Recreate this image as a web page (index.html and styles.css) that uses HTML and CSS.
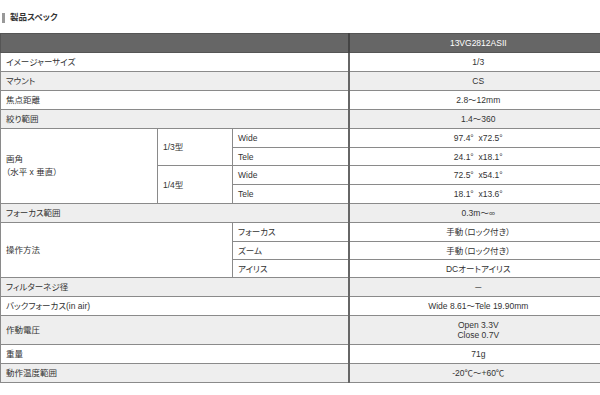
FILE: index.html
```html
<!DOCTYPE html>
<html lang="ja">
<head>
<meta charset="utf-8">
<title>製品スペック</title>
<link rel="stylesheet" href="styles.css">
</head>
<body>
<div class="heading"><span class="bar"></span><h2 class="title">製品スペック</h2></div>
<table class="spec">
  <colgroup>
    <col class="c1"><col class="c2"><col class="c3"><col class="c4">
  </colgroup>
  <thead>
    <tr><th colspan="3" class="blank"></th><th class="model">13VG2812ASII</th></tr>
  </thead>
  <tbody>
    <tr class="w"><td colspan="3">イメージャーサイズ</td><td class="v">1/3</td></tr>
    <tr class="g"><td colspan="3">マウント</td><td class="v">CS</td></tr>
    <tr class="w"><td colspan="3">焦点距離</td><td class="v">2.8～12mm</td></tr>
    <tr class="g"><td colspan="3">絞り範囲</td><td class="v">1.4～360</td></tr>
    <tr class="w"><td rowspan="4" class="angle">画角<br>（水平 x 垂直）</td><td rowspan="2">1/3型</td><td>Wide</td><td class="v">97.4°&nbsp; x72.5°</td></tr>
    <tr class="w short"><td>Tele</td><td class="v">24.1°&nbsp; x18.1°</td></tr>
    <tr class="w"><td rowspan="2">1/4型</td><td>Wide</td><td class="v">72.5°&nbsp; x54.1°</td></tr>
    <tr class="w"><td>Tele</td><td class="v">18.1°&nbsp; x13.6°</td></tr>
    <tr class="g"><td colspan="3">フォーカス範囲</td><td class="v">0.3m～∞</td></tr>
    <tr class="w"><td colspan="2" rowspan="3">操作方法</td><td>フォーカス</td><td class="v">手動（ロック付き）</td></tr>
    <tr class="w short"><td>ズーム</td><td class="v">手動（ロック付き）</td></tr>
    <tr class="w short"><td>アイリス</td><td class="v">DCオートアイリス</td></tr>
    <tr class="g"><td colspan="3">フィルターネジ径</td><td class="v">－</td></tr>
    <tr class="w"><td colspan="3">バックフォーカス(in air)</td><td class="v">Wide 8.61～Tele 19.90mm</td></tr>
    <tr class="g"><td colspan="3">作動電圧</td><td class="v">Open 3.3V<br>Close 0.7V</td></tr>
    <tr class="w"><td colspan="3">重量</td><td class="v">71g</td></tr>
    <tr class="g"><td colspan="3">動作温度範囲</td><td class="v">-20℃～+60℃</td></tr>
  </tbody>
</table>
</body>
</html>
```
FILE: styles.css
```css
html, body {
  margin: 0;
  padding: 0;
  background: #fff;
  overflow: hidden;
}
body {
  font-family: "Liberation Sans", "Noto Sans CJK JP", sans-serif;
  font-size: 8.5px;
  color: #333;
  font-feature-settings: "palt";
}
.heading {
  display: flex;
  align-items: flex-start;
  padding: 13px 0 0 2px;
  height: 20px;
}
.bar {
  width: 3px;
  height: 10px;
  background: #999;
}
.title {
  margin: 0 0 0 5px;
  font-size: 8.5px;
  line-height: 8px;
  font-weight: bold;
  color: #333;
}
.spec {
  border-collapse: collapse;
  table-layout: fixed;
  width: 607px;
}
.c1 { width: 157px; }
.c2 { width: 75px; }
.c3 { width: 116px; }
.c4 { width: 259px; }
.spec th, .spec td {
  border: 1px solid #8a8a8a;
  padding: 4px 5px;
  line-height: 10px;
  text-align: left;
  vertical-align: middle;
  font-weight: normal;
}
.spec .short td {
  padding-bottom: 3px;
}
.spec th {
  background: #666;
  color: #fff;
  border-color: #555;
}
.spec th.model {
  text-align: center;
  border-left: 2px solid #444;
}
.spec td.v {
  text-align: center;
  border-left: 2px solid #666;
}
.w { background: #fff; }
.g { background: #eee; }
.spec td.angle { line-height: 13px; }
```
